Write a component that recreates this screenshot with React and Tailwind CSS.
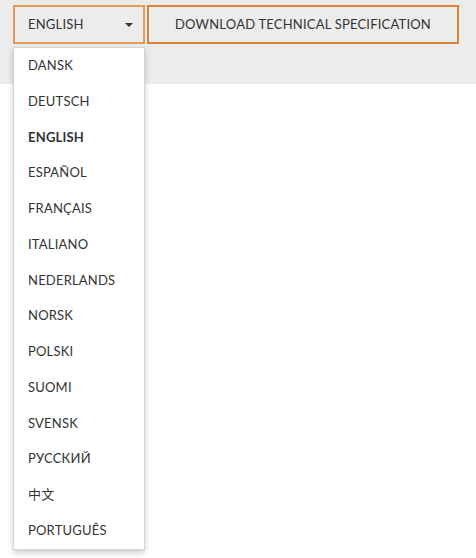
import React from 'react';

const languages = [
  'DANSK',
  'DEUTSCH',
  'ENGLISH',
  'ESPAÑOL',
  'FRANÇAIS',
  'ITALIANO',
  'NEDERLANDS',
  'NORSK',
  'POLSKI',
  'SUOMI',
  'SVENSK',
  'РУССКИЙ',
  '中文',
  'PORTUGUÊS',
];

export default function App() {
  const current = 'ENGLISH';

  return (
    <div
      className="w-[476px] h-[558px] bg-white text-[#333] overflow-hidden"
      style={{ fontFamily: 'Lato, "Noto Sans CJK SC", sans-serif' }}
    >
      {/* toolbar */}
      <div className="h-[84px] bg-[#ececec] pt-[5px] pl-[13px] flex items-start gap-[2px]">
        <div className="relative">
          <button className="w-[132px] h-[39px] border-2 border-[#e39b5a] bg-[#ececec] flex items-center justify-between pl-[13px] pr-[10px] text-[13px] tracking-[0.2px]">
            <span>{current}</span>
            <svg width="8" height="4" viewBox="0 0 8 4" className="fill-[#333]">
              <path d="M0 0h8L4 4z" />
            </svg>
          </button>

          {/* dropdown */}
          <ul className="absolute left-0 top-[42px] w-[132px] bg-white border border-[#d4d4d4] shadow-[0_3px_6px_rgba(0,0,0,0.2)] z-10">
            {languages.map(lang => (
              <li
                key={lang}
                className={`h-[35.75px] flex items-center pl-[14px] text-[13px] tracking-[0.2px] ${
                  lang === current ? 'font-bold' : ''
                }`}
              >
                {lang}
              </li>
            ))}
          </ul>
        </div>

        <button className="w-[312px] h-[39px] border-2 border-[#d9833a] bg-[#ececec] text-[13px] tracking-[0.2px] flex items-center justify-center">
          DOWNLOAD TECHNICAL SPECIFICATION
        </button>
      </div>
    </div>
  );
}
